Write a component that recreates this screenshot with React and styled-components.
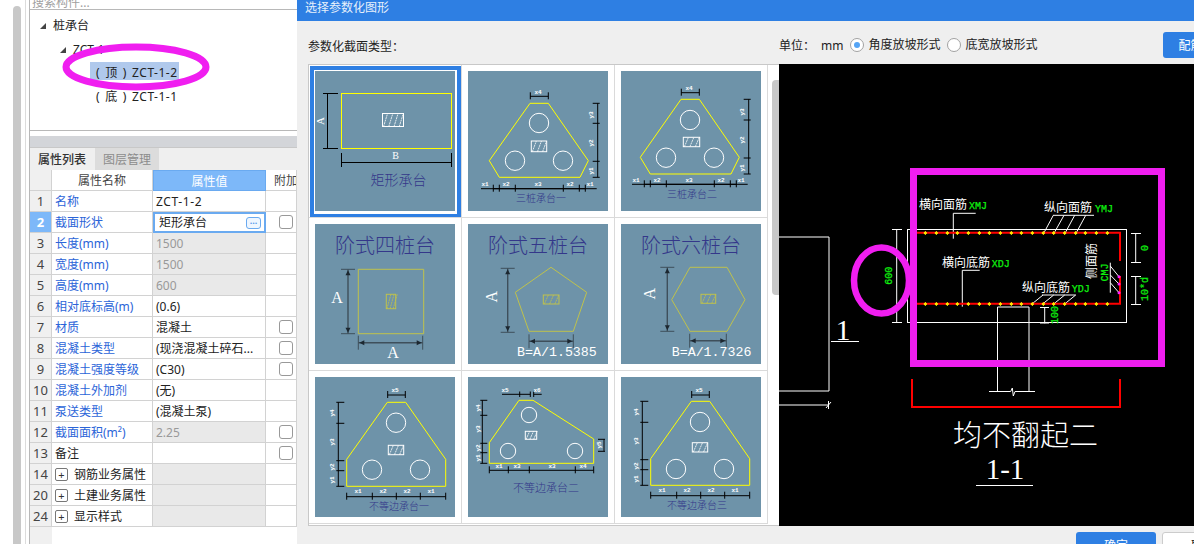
import React from "react";
import styled, { createGlobalStyle } from "styled-components";

const CJK = '"Noto Sans CJK SC", sans-serif';
const UI = `"Noto Sans", ${CJK}`;
const MONO = `"Liberation Mono", ${CJK}`;
const SERIF = `"Liberation Serif", ${CJK}`;

const Global = createGlobalStyle`
  html, body { margin: 0; padding: 0; overflow: hidden; background: #fff; }
  * { box-sizing: border-box; }
`;

const Page = styled.div`
  width: 1194px; height: 544px; display: flex; overflow: hidden;
  font: 12px/1 ${UI}; color: #222; background: #fff;
`;
const Sidebar = styled.aside`
  width: 297px; flex: none; display: flex; height: 544px;
`;
const Gutter = styled.div`
  width: 26px; margin-right: 3px; flex: none; padding: 6px 0 0 13px;
  border-right: 1px solid #dcdcdc;
`;
const ScrollThumb = styled.div`
  width: 8px; height: 100%; background: #c8c8c8; border-radius: 4px 4px 0 0;
`;
const Panel = styled.div`
  flex: 1; min-width: 0; display: flex; flex-direction: column; border-left: 1px solid #b8b8b8; overflow: hidden;
`;
const SearchRow = styled.div`
  height: 9px; flex: none; display: flex; align-items: flex-end; padding-left: 3px; color: #a0a0a0; overflow: hidden;
  margin-left: -1px; background: #fff;
`;
const SearchText = styled.span`line-height: 13px; flex: none;`;
const Tree = styled.div`
  position: relative; height: 122px; flex: none; margin-left: -1px; padding-top: 3px;
  border: 1px solid #b8b8b8; border-right: 0; background: #fff;
`;
const TreeRow = styled.div`
  height: 24px; display: flex; align-items: center; padding: 2px 0 0 ${p => p.$indent}px; gap: 7px;
`;
const Caret = styled.span`
  width: 0; height: 0; border-style: solid; border-width: 0 0 6px 6px;
  border-color: transparent transparent #444 transparent; flex: none;
`;
const TreeLeaf = styled.span`
  height: 18px; display: flex; align-items: center; align-self: flex-start; margin-top: -1px;
  padding: 4px 0 0 6px; width: 89px; white-space: nowrap; word-spacing: 1.5px; letter-spacing: .5px;
  background: ${p => (p.$on ? "#b0c9ec" : "transparent")};
`;
const TreeCircle = styled.svg`
  position: absolute; left: 32px; top: 33px; width: 148px; height: 48px;
`;
const Strip = styled.div`
  height: 11px; flex: none; margin-top: 5px; background: #d3d5d9;
`;
const TabBar = styled.div`
  height: 23px; flex: none; display: flex; gap: 1px; background: #efefef; border-top: 1px solid #c8c8c8;
`;
const Tab = styled.div`
  width: 64px; display: flex; align-items: center; justify-content: center; font-family: ${CJK};
  font-weight: ${p => (p.$on ? 500 : 400)}; color: ${p => (p.$on ? "#333" : "#8c8c8c")};
  background: ${p => (p.$on ? "#efefef" : "#dcdcdc")};
`;
const Row = styled.div`
  height: 21px; flex: none; display: grid; grid-template-columns: 22px 101px 113px 31px;
`;
const Cell = styled.div`
  display: flex; align-items: center; min-width: 0; white-space: nowrap; overflow: hidden;
  border-right: 1px solid #d2d2d2; border-bottom: 1px solid #d2d2d2; padding: 2px 0 0 3px;
`;
const IndexCell = styled(Cell)`
  padding: 1px 0 0; justify-content: center; font-size: 13px; color: ${p => (p.$on ? "#fff" : "#444")};
  font-weight: ${p => (p.$on ? 700 : 400)}; background: ${p => (p.$on ? "#7db8f9" : "#f0f0f0")};
`;
const NameCell = styled(Cell)`
  color: ${p => (p.$plain ? "#222" : "#2b64d8")};
`;
const HeadCell = styled(Cell)`
  justify-content: center; color: #444; padding: 2px 0 0;
`;
const ValueHead = styled(HeadCell)`
  background: #7db8f9; color: #fff; border: 1px solid #6aaaf0;
`;
const AttachHead = styled(Cell)`color: #444; padding-left: 8px;`;
const ValueCell = styled(Cell)`
  color: ${p => (p.$dim ? "#999" : "#222")};
  letter-spacing: ${p => (p.$code ? ".6px" : "normal")};
  background: ${p => (p.$dim || p.$fill ? "#e9e9e9" : "#fff")};
`;
const ActiveValue = styled.div`
  display: flex; align-items: center; justify-content: space-between; padding: 0 3px 0 4px;
  border: 2px solid #6aaaf0; background: #fff;
`;
const MoreButton = styled.span`
  width: 15px; height: 12px; border: 1px solid #6aaaf0; border-radius: 3px; background: #eef6ff;
  display: flex; align-items: center; justify-content: center; color: #5a9bea; font-size: 9px; font-weight: 700;
`;
const AttachCell = styled(Cell)`padding: 0 0 0 13px;`;
const Check = styled.span`
  width: 14px; height: 14px; border: 1px solid #999; border-radius: 3px; background: #fff; flex: none;
`;
const Plus = styled.span`
  width: 13px; height: 13px; border: 1px solid #777; border-radius: 2px; margin: 0 6px 2px 0; flex: none;
  display: flex; align-items: center; justify-content: center; font-size: 11px; line-height: 1; color: #333;
`;
const Filler = styled.div`
  flex: 1; display: grid; grid-template-columns: 22px 1fr;
`;
const FillerIndex = styled.div`background: #f0f0f0;`;

const Dialog = styled.section`
  flex: 1; min-width: 0; height: 544px; display: flex; flex-direction: column; background: #efefef; overflow: hidden;
`;
const TitleBar = styled.header`
  height: 21px; flex: none; display: flex; align-items: center; padding: 0 0 6px 8px; background: #2e7fe3; color: #e6f0fb;
`;
const Toolbar = styled.div`
  height: 43px; flex: none; display: flex; align-items: center; padding: 5px 0 0 11px; white-space: nowrap;
`;
const TypeLabel = styled.div`width: 471px; flex: none; padding-top: 4px;`;
const UnitLabel = styled.span`padding-top: 2px;`;
const Mm = styled.span`margin: 0 7px 0 6px; padding-top: 2px;`;
const Radio = styled.span`
  width: 14px; height: 14px; flex: none; border-radius: 50%; background: #fff; border: 1px solid #a2a2a2;
  display: flex; align-items: center; justify-content: center; margin-right: 4px;
  &::after { content: ""; width: 6px; height: 6px; border-radius: 50%; background: ${p => (p.$on ? "#55a4f5" : "transparent")}; }
`;
const RadioLabel = styled.span`margin-right: 7px;`;
const PrimaryButton = styled.button`
  width: 80px; height: 26px; flex: none; border: 0; border-radius: 3px; background: #2e7fe3; color: #fff;
  font: 12px ${UI}; padding: 0;
`;
const ToolbarButton = styled(PrimaryButton)`margin-left: 118px; text-align: left; padding-left: 16px;`;
const Main = styled.div`
  height: 462px; flex: none; display: flex; padding-left: 11px;
`;
const Gallery = styled.div`
  width: 471px; flex: none; display: flex; background: #fff; border: 1px solid #c8c8c8; border-right: 0;
`;
const Grid = styled.div`
  width: 459px; flex: none; display: grid; grid-template-columns: repeat(3, 153px); grid-auto-rows: 153px;
`;
const GridCell = styled.div`
  position: relative; padding: 6px; border-right: 1px solid #dadada; border-bottom: 1px solid #dadada;
  ${p => p.$on && `&::after { content: ""; position: absolute; left: 1px; top: 1px; right: 0; bottom: 0; border: 4px solid #2e7fe3; border-bottom-width: 3px; }`}
`;
const Thumb = styled.svg`
  display: block; width: 140px; height: 140px; background: #6e93a9;
`;
const GalleryTrack = styled.div`flex: 1; padding: 15px 0 0 4px;`;
const GalleryThumb = styled.div`
  height: 215px; background: #c8c8c8; border-radius: 4px 0 0 4px;
`;
const Preview = styled.svg`
  display: block; width: 415px; height: 462px; flex: none; background: #000;
`;
const Footer = styled.footer`
  flex: 1; display: flex; gap: 6px; padding: 6px 0 0 779px;
`;
const PlainButton = styled(PrimaryButton)`
  background: #fff; color: #222; border: 1px solid #ccc; text-align: left; padding-left: 28px;
`;

/* ---------- thumbnail drawings ---------- */
const DimText = styled.text`
  font: bold 6px ${MONO}; fill: #fff; text-anchor: middle;
`;
const TitleText = styled.text`
  font-family: ${CJK}; font-weight: 300; fill: ${p => p.$c || "#34378a"}; font-size: ${p => p.$size}px; text-anchor: middle;
`;
const BigLetter = styled.text`
  font: ${p => p.$size || 16}px ${SERIF}; fill: #fff; text-anchor: middle;
`;
const FormulaText = styled.text`
  font: 13.3px ${MONO}; fill: #fff;
`;
const CadText = styled.text`
  font: ${p => p.$weight || 400} ${p => p.$size || 12}px ${CJK}; fill: #fff; text-anchor: ${p => p.$anchor || "start"};
`;
const CadCode = styled.text`
  font: ${p => p.$size || 10}px ${MONO}; fill: #0ff00f; text-anchor: ${p => p.$anchor || "start"}; stroke: #0ff00f; stroke-width: .25px;
`;
const CadSerif = styled.text`
  font: ${p => p.$size}px ${SERIF}; fill: #fff; text-anchor: middle;
`;

const Hatch = ({ x, y, w, h, c = "#fff" }) => {
  const n = Math.max(3, Math.round(w / 5));
  const strokes = [];
  for (let i = 0; i < n; i++) {
    const sx = x + (w * (i + 0.2)) / n;
    strokes.push(<line key={i} x1={sx} y1={y + h} x2={sx + Math.min(h * 0.45, 4)} y2={y} stroke={c} strokeWidth=".8" strokeDasharray="2 .6" />);
  }
  return (
    <g>
      <rect x={x} y={y} width={w} height={h} fill="none" stroke={c} strokeWidth="1" />
      {strokes}
    </g>
  );
};

const hDim = (y, xs, up = 4, down = 3) => {
  const out = [[xs[0], y, xs[xs.length - 1], y]];
  xs.forEach(x => out.push([x, y - up, x, y + down]));
  return out;
};
const vDim = (x, ys, l = 4, r = 3) => {
  const out = [[x, ys[0], x, ys[ys.length - 1]]];
  ys.forEach(y => out.push([x - l, y, x + r, y]));
  return out;
};
const rot = (txt, x, y) => ({ txt, x, y, r: -90 });
const lab = (txt, x, y) => ({ txt, x, y });

const pileThumbs = [
  {
    poly: "62,32.3 80.3,32.3 120.3,89.7 112,106.3 31.3,106.3 21.3,89.7", r: 9.7,
    circles: [[71, 52], [47, 89.7], [95, 89.7]], hatch: [63.3, 70, 15.4, 10.7],
    lines: [
      ...hDim(25.3, [62.3, 80.3]),
      ...vDim(129.7, [32.3, 52.3, 90.3, 106.3], 5, 2),
      ...hDim(117.7, [25.3, 31.3, 47.3, 95.3, 111.3, 117.3]),
      [13, 117.7, 128.7, 117.7],
    ],
    labels: [lab("x4", 70, 23), rot("y3", 125, 44), rot("y2", 125, 72), rot("y1", 125, 100),
      lab("x1", 17, 115), lab("x2", 38, 115), lab("x3", 70, 115), lab("x2", 102, 115), lab("x1", 122, 115)],
    title: ["三桩承台一", 73, 131, 10],
  },
  {
    poly: "60,28.3 78.3,28.3 118.3,86.3 110,103 29.3,103 19.3,86.3", r: 9.7,
    circles: [[69, 49], [45, 86.7], [93, 86.7]], hatch: [62.3, 66.3, 16.4, 9.4],
    lines: [
      ...hDim(21.7, [60.3, 78.3]),
      ...vDim(127.7, [28.3, 49, 87, 103], 5, 2),
      ...hDim(113.3, [23.3, 29.3, 45.3, 93.3, 109.3, 115.3]),
      [11, 113.3, 126.7, 113.3],
    ],
    labels: [lab("x4", 68, 19), rot("y3", 123, 41), rot("y2", 123, 69), rot("y1", 123, 97),
      lab("x1", 15, 111), lab("x2", 36, 111), lab("x3", 68, 111), lab("x2", 100, 111), lab("x1", 120, 111)],
    title: ["三桩承台二", 71, 127, 10],
  },
];
const stepThumbs = [
  {
    shape: "43.3,45.3 108.7,45.3 108.7,109.7 43.3,109.7", hatch: [71.3, 70.3, 9.4, 14.4],
    v: [33, 45.3, 109.7, 7], h: [118.7, 43.3, 107.7],
    letter: [22, 79, 0], bottomLetter: [78, 134],
    title: "阶式四桩台",
  },
  {
    shape: "83,43.3 118.7,68.3 105.3,107.3 61,107.3 47.3,68.3", hatch: [75.3, 71, 15.7, 9],
    v: [39.7, 44.3, 108.3, 7], h: [117.3, 61, 105.3],
    letter: [29.5, 72.7, -90], formula: ["B=A/1.5385", 49, 132],
    title: "阶式五桩台",
  },
  {
    shape: "69,43.3 106,43.3 124,75.7 106,107.3 69,107.3 50.7,75.7", hatch: [80, 70.3, 14.7, 9],
    v: [46.3, 43.3, 107.3, 7], h: [116.7, 68.7, 105.3],
    letter: [34.5, 69.7, -90], formula: ["B=A/1.7326", 50.7, 132],
    title: "阶式六桩台",
  },
];
const unevenThumbs = [
  {
    poly: "72.3,25.3 90.7,25.3 130.7,82.3 130.7,109.3 31.7,109.3 31.7,82.3", r: 9.7,
    circles: [[81, 45.7], [57, 92.7], [105, 92.7]], hatch: [73.3, 68.3, 15.4, 9.4],
    lines: [
      ...hDim(18, [72.7, 90.3]),
      ...vDim(23.3, [25.3, 46.3, 83.7, 93.7, 109.3], 2, 6),
      ...hDim(119.7, [31.7, 57.3, 81.3, 105.3, 130.7]),
    ],
    labels: [lab("x5", 80, 15), rot("y4", 19, 36), rot("y3", 19, 65), rot("y2", 19, 90), rot("y1", 19, 103),
      lab("x1", 43, 116), lab("x2", 68, 116), lab("x2", 92, 116), lab("x1", 116, 116)],
    title: ["不等边承台一", 84, 133, 10],
  },
  {
    poly: "51,23.3 65,23.3 125.7,62 125.7,86.3 21.3,86.3 21.3,65.7", r: 7.7,
    circles: [[61, 38], [40, 74], [107, 74]], hatch: [57.3, 54.3, 11.4, 8],
    lines: [
      [34, 17.3, 62.3, 17.3], [65.7, 17.3, 73.7, 17.3], [51.7, 14.5, 51.7, 20], [62.3, 14.5, 62.3, 20], [65.7, 14.5, 65.7, 20],
      ...vDim(14.3, [23.3, 38.3, 66.3, 75.7, 86.3], 2, 5),
      ...vDim(136, [62.3, 74.3], 6, 1),
      ...hDim(93.3, [21.3, 40.3, 61.3, 107.3, 125.7]),
    ],
    labels: [lab("x5", 37, 15), lab("x6", 69, 15), rot("y4", 12, 31), rot("y3", 12, 52), rot("y2", 12, 71), rot("y1", 12, 81), rot("y5", 133, 68),
      lab("x1", 31, 91), lab("x3", 49, 91), lab("x3", 84, 91), lab("x4", 115, 91)],
    title: ["不等边承台二", 78, 115, 11],
  },
  {
    poly: "70.3,24.3 88.7,24.3 128.7,81.7 128.7,108.3 29.7,108.3 29.7,81.7", r: 9.7,
    circles: [[79, 45], [55, 92], [103, 92]], hatch: [71.3, 65.7, 15.4, 9.3],
    lines: [
      ...hDim(18, [70.7, 88.3]),
      ...vDim(21.3, [24.3, 45.3, 82.7, 92.7, 108.3], 2, 6),
      ...hDim(118.7, [29.7, 55.7, 79.7, 103.7, 128.7]),
    ],
    labels: [lab("x5", 78, 15), rot("y4", 17, 35), rot("y3", 17, 64), rot("y2", 17, 89), rot("y1", 17, 102),
      lab("x1", 41, 115), lab("x2", 66, 115), lab("x2", 90, 115), lab("x1", 114, 115)],
    title: ["不等边承台三", 76, 132, 10],
  },
];

const PileThumb = ({ d }) => (
  <Thumb viewBox="0 0 140 140">
    <polygon points={d.poly} fill="none" stroke="#ffff00" strokeWidth="1" />
    {d.circles.map(([x, y], i) => <circle key={i} cx={x} cy={y} r={d.r} fill="none" stroke="#fff" strokeWidth="1" />)}
    <Hatch x={d.hatch[0]} y={d.hatch[1]} w={d.hatch[2]} h={d.hatch[3]} />
    {d.lines.map((l, i) => <line key={i} x1={l[0]} y1={l[1]} x2={l[2]} y2={l[3]} stroke="#000" strokeWidth="1" />)}
    {d.labels.map((l, i) => (
      <DimText key={i} x={l.x} y={l.y} transform={l.r ? `rotate(${l.r} ${l.x} ${l.y})` : undefined}>{l.txt}</DimText>
    ))}
    <TitleText x={d.title[1]} y={d.title[2]} $size={d.title[3]}>{d.title[0]}</TitleText>
  </Thumb>
);

const StepThumb = ({ d }) => {
  const [vx, vy1, vy2, t] = d.v;
  const [hy, hx1, hx2] = d.h;
  const dim = "#3e4f5b";
  return (
    <Thumb viewBox="0 0 140 140">
      <TitleText x="70" y="29" $size={20}>{d.title}</TitleText>
      <polygon points={d.shape} fill="none" stroke="#bfc24c" strokeWidth="1" />
      <Hatch x={d.hatch[0]} y={d.hatch[1]} w={d.hatch[2]} h={d.hatch[3]} c="#bfc24c" />
      <g stroke={dim} strokeWidth="1">
        <line x1={vx} y1={vy1} x2={vx} y2={vy2} strokeWidth="1.4" />
        <line x1={vx - t} y1={vy1} x2={vx + t} y2={vy1} />
        <line x1={vx - t} y1={vy2} x2={vx + t} y2={vy2} />
        <line x1={hx1} y1={hy} x2={hx2} y2={hy} strokeWidth="1.4" />
        <line x1={hx1} y1={hy - t} x2={hx1} y2={hy + t} />
        <line x1={hx2} y1={hy - t} x2={hx2} y2={hy + t} />
      </g>
      <g fill="#1c2730">
        <polygon points={`${vx},${vy1 + 1} ${vx - 2.5},${vy1 + 6} ${vx + 2.5},${vy1 + 6}`} />
        <polygon points={`${vx},${vy2 - 1} ${vx - 2.5},${vy2 - 6} ${vx + 2.5},${vy2 - 6}`} />
        <polygon points={`${hx1 + 1},${hy} ${hx1 + 6},${hy - 2.5} ${hx1 + 6},${hy + 2.5}`} />
        <polygon points={`${hx2 - 1},${hy} ${hx2 - 6},${hy - 2.5} ${hx2 - 6},${hy + 2.5}`} />
      </g>
      <BigLetter x={d.letter[0]} y={d.letter[1]} transform={d.letter[2] ? `rotate(${d.letter[2]} ${d.letter[0]} ${d.letter[1]})` : undefined}>A</BigLetter>
      {d.bottomLetter && <BigLetter x={d.bottomLetter[0]} y={d.bottomLetter[1]}>A</BigLetter>}
      {d.formula && <FormulaText x={d.formula[1]} y={d.formula[2]}>{d.formula[0]}</FormulaText>}
    </Thumb>
  );
};

const RectThumb = () => (
  <Thumb viewBox="0 0 140 140">
    <rect x="26.5" y="22.5" width="110" height="55" fill="none" stroke="#ffff00" strokeWidth="1" />
    <Hatch x={67.5} y={42.5} w={21} h={13} />
    <g stroke="#000" strokeWidth="1">
      <line x1="12.5" y1="22.5" x2="12.5" y2="77.5" />
      <line x1="8" y1="22.5" x2="23" y2="22.5" />
      <line x1="8" y1="77.5" x2="23" y2="77.5" />
      <line x1="26.5" y1="91.5" x2="136.5" y2="91.5" />
      <line x1="26.5" y1="82" x2="26.5" y2="96" />
      <line x1="136.5" y1="82" x2="136.5" y2="96" />
    </g>
    <BigLetter x="8.5" y="50" $size={11} transform="rotate(-90 8.5 50)">A</BigLetter>
    <BigLetter x="80.5" y="88" $size={10}>B</BigLetter>
    <TitleText x="83.5" y="114" $size={14}>矩形承台</TitleText>
  </Thumb>
);

/* ---------- detail drawing ---------- */
const dotXs = [259, 292, 325, 355, 388, 421, 451, 484, 517, 547, 580, 613, 644, 677, 710, 739, 772, 805].map(z => 840 + z / 3);

const cadWhite = [
  [779, 237, 830, 237], [830, 237, 830, 391], [779, 391, 830, 391], [779, 405, 830, 405], [827, 408, 832, 402], [829.5, 401, 829.5, 409],
  [832, 341.5, 860, 341.5],
  [897.7, 229, 897.7, 322.7], [893, 229.5, 903, 229.5], [893, 322.5, 903, 322.5],
  [954.3, 213.3, 954.3, 238.7], [954.3, 213.3, 976.7, 213.3],
  [1054, 215.3, 1095, 215.3], [1045, 232.7, 1054.3, 215.3], [1055.3, 232.7, 1065, 215.3], [1066.3, 232.7, 1075.7, 215.3], [1077.3, 232.7, 1086.7, 215.3],
  [963.3, 270.3, 963.3, 306.7], [963.3, 270.3, 980.7, 270.3],
  [1043, 295, 1076.7, 295], [1033.3, 303.7, 1044, 295], [1044, 303.7, 1054.7, 295], [1055, 303.7, 1065.7, 295], [1066, 303.7, 1076.7, 295],
  [1111.3, 262.7, 1111.3, 292.7], [1111.3, 266, 1120, 276.7], [1111.3, 275, 1120, 284], [1111.3, 282.7, 1120, 292.7],
  [1136.7, 233.3, 1136.7, 262.7], [1132, 233.5, 1142, 233.5], [1132, 262.5, 1142, 262.5],
  [1136.7, 276, 1136.7, 304.3], [1132, 276.5, 1142, 276.5], [1132, 304.5, 1142, 304.5],
  [998.5, 307, 998.5, 391], [1030, 307, 1030, 391], [998.5, 307, 1030, 307],
  [1045.7, 307, 1045.7, 323.3], [1041, 307.5, 1050, 307.5], [1041, 323, 1050, 323],
  [977, 485.5, 1034, 485.5],
];

const DetailDrawing = () => (
  <Preview viewBox="780 64 415 462">
    <g stroke="#fff" strokeWidth="1" fill="none">
      <rect x="908.5" y="229.5" width="219" height="93" />
      {cadWhite.map((l, i) => <line key={i} x1={l[0]} y1={l[1]} x2={l[2]} y2={l[3]} />)}
      <polyline points="990,391.5 1011.7,391.5 1013.3,388 1014.3,396 1016,391.5 1036,391.5" />
    </g>
    <g stroke="#f00" strokeWidth="2" fill="none">
      <polyline points="911,232.7 1121,232.7 1121,261" />
      <polyline points="911,303.7 1121,303.7 1121,276" />
      <polyline points="913,379 913,407 1121,407 1121,379" />
    </g>
    {dotXs.map(x => (
      <g key={x} fill="#ffe600">
        <rect x={x - 1.5} y="232" width="3" height="2" />
        <rect x={x - 0.5} y="231" width="1" height="4" />
        <rect x={x - 1.5} y="303" width="3" height="2" />
        <rect x={x - 0.5} y="302" width="1" height="4" />
      </g>
    ))}
    <g fill="#ff20ff">
      <circle cx="1120" cy="276.7" r="1.5" />
      <circle cx="1120" cy="284" r="1.5" />
      <circle cx="1120" cy="292.7" r="1.5" />
    </g>
    <CadText x="920" y="209">横向面筋</CadText>
    <CadCode x="970" y="209">XMJ</CadCode>
    <CadText x="1045" y="212">纵向面筋</CadText>
    <CadCode x="1096" y="212">YMJ</CadCode>
    <CadText x="943" y="267">横向底筋</CadText>
    <CadCode x="992.7" y="267">XDJ</CadCode>
    <CadText x="1023" y="292">纵向底筋</CadText>
    <CadCode x="1072.7" y="292">YDJ</CadCode>
    <CadText x="1097" y="261" $anchor="middle" transform="rotate(-90 1097 261)">侧面筋</CadText>
    <CadCode x="1109" y="272.5" $anchor="middle" transform="rotate(-90 1109 272.5)">CMJ</CadCode>
    <CadCode x="893" y="275.7" $anchor="middle" transform="rotate(-90 893 275.7)">600</CadCode>
    <CadCode x="1149" y="248" $anchor="middle" transform="rotate(-90 1149 248)">0</CadCode>
    <CadCode x="1149" y="289" $anchor="middle" transform="rotate(-90 1149 289)">10*d</CadCode>
    <CadCode x="1059" y="315" $anchor="middle" transform="rotate(-90 1059 315)">100</CadCode>
    <CadSerif x="844" y="340" $size={30}>1</CadSerif>
    <CadText x="1026.5" y="446" $size={29} $weight={300} $anchor="middle">均不翻起二</CadText>
    <CadSerif x="1006" y="479" $size={29}>1-1</CadSerif>
    <rect x="914.5" y="171.5" width="248" height="192" fill="none" stroke="#f01ef0" strokeWidth="7" />
    <ellipse cx="882.5" cy="280.5" rx="27.5" ry="33" fill="none" stroke="#f01ef0" strokeWidth="6.5" />
  </Preview>
);

/* ---------- data ---------- */
const rows = [
  { i: 1, name: "名称", value: "ZCT-1-2", code: true },
  { i: 2, name: "截面形状", value: "矩形承台", active: true, check: true },
  { i: 3, name: "长度(mm)", value: "1500", dim: true },
  { i: 4, name: "宽度(mm)", value: "1500", dim: true },
  { i: 5, name: "高度(mm)", value: "600", dim: true },
  { i: 6, name: "相对底标高(m)", value: "(0.6)" },
  { i: 7, name: "材质", value: "混凝土", check: true },
  { i: 8, name: "混凝土类型", value: "(现浇混凝土碎石...", check: true },
  { i: 9, name: "混凝土强度等级", value: "(C30)", check: true },
  { i: 10, name: "混凝土外加剂", value: "(无)" },
  { i: 11, name: "泵送类型", value: "(混凝土泵)" },
  { i: 12, name: "截面面积(m²)", value: "2.25", dim: true, check: true },
  { i: 13, name: "备注", value: "", plain: true, check: true },
  { i: 14, name: "钢筋业务属性", group: true },
  { i: 20, name: "土建业务属性", group: true },
  { i: 24, name: "显示样式", group: true },
];

const PropertyRow = ({ r }) => (
  <Row>
    <IndexCell $on={r.active}>{r.i}</IndexCell>
    <NameCell $plain={r.plain || r.group}>
      {r.group && <Plus>+</Plus>}
      {r.name}
    </NameCell>
    {r.active ? (
      <ActiveValue>
        {r.value}
        <MoreButton>···</MoreButton>
      </ActiveValue>
    ) : (
      <ValueCell $dim={r.dim} $fill={r.group} $code={r.code}>{r.value}</ValueCell>
    )}
    <AttachCell>{r.check && <Check />}</AttachCell>
  </Row>
);

export default function App() {
  return (
    <Page>
      <Global />
      <Sidebar>
        <Gutter><ScrollThumb /></Gutter>
        <Panel>
          <SearchRow><SearchText>搜索构件...</SearchText></SearchRow>
          <Tree>
            <TreeRow $indent={10}><Caret />桩承台</TreeRow>
            <TreeRow $indent={30}><Caret />ZCT-1</TreeRow>
            <TreeRow $indent={60}><TreeLeaf $on>( 顶 ) ZCT-1-2</TreeLeaf></TreeRow>
            <TreeRow $indent={60}><TreeLeaf>( 底 ) ZCT-1-1</TreeLeaf></TreeRow>
            <TreeCircle viewBox="0 0 148 48">
              <ellipse cx="74" cy="24" rx="70" ry="20" fill="none" stroke="#f01ef0" strokeWidth="7" />
            </TreeCircle>
          </Tree>
          <Strip />
          <TabBar>
            <Tab $on>属性列表</Tab>
            <Tab>图层管理</Tab>
          </TabBar>
          <Row>
            <IndexCell />
            <HeadCell>属性名称</HeadCell>
            <ValueHead>属性值</ValueHead>
            <AttachHead>附加</AttachHead>
          </Row>
          {rows.map(r => <PropertyRow key={r.i} r={r} />)}
          <Filler><FillerIndex /></Filler>
        </Panel>
      </Sidebar>
      <Dialog>
        <TitleBar>选择参数化图形</TitleBar>
        <Toolbar>
          <TypeLabel>参数化截面类型：</TypeLabel>
          <UnitLabel>单位：</UnitLabel>
          <Mm>mm</Mm>
          <Radio $on />
          <RadioLabel>角度放坡形式</RadioLabel>
          <Radio />
          <RadioLabel>底宽放坡形式</RadioLabel>
          <ToolbarButton>配筋</ToolbarButton>
        </Toolbar>
        <Main>
          <Gallery>
            <Grid>
              <GridCell $on><RectThumb /></GridCell>
              {pileThumbs.map((d, i) => <GridCell key={i}><PileThumb d={d} /></GridCell>)}
              {stepThumbs.map((d, i) => <GridCell key={i}><StepThumb d={d} /></GridCell>)}
              {unevenThumbs.map((d, i) => <GridCell key={i}><PileThumb d={d} /></GridCell>)}
            </Grid>
            <GalleryTrack><GalleryThumb /></GalleryTrack>
          </Gallery>
          <DetailDrawing />
        </Main>
        <Footer>
          <PrimaryButton>确定</PrimaryButton>
          <PlainButton>取消</PlainButton>
        </Footer>
      </Dialog>
    </Page>
  );
}
